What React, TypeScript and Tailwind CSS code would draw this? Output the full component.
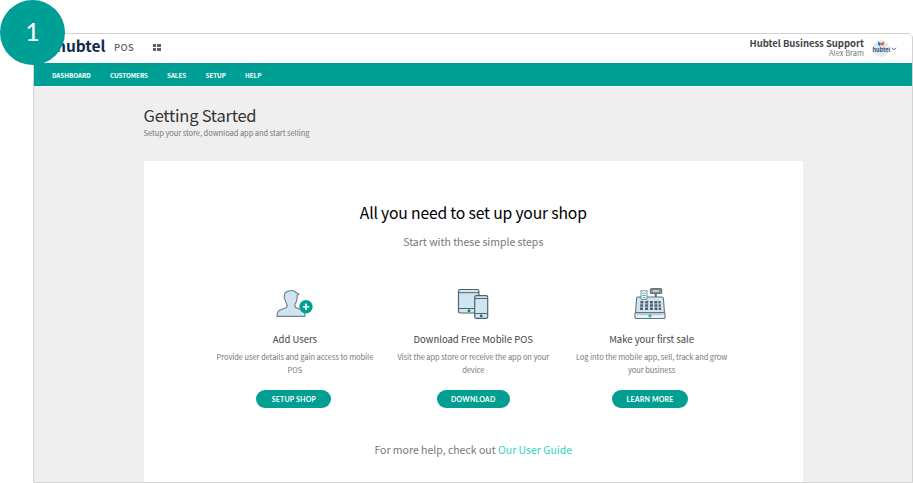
import React from "react";

const nav = [
  { label: "DASHBOARD", cls: "w-[58px]" },
  { label: "CUSTOMERS", cls: "w-[57px]" },
  { label: "SALES", cls: "w-[38.500px]" },
  { label: "SETUP", cls: "w-[39.500px]" },
  { label: "HELP", cls: "w-[30px]" },
];

function UserIcon() {
  return (
    <svg width="40" height="34" viewBox="0 0 40 34" className="-ml-[2px] block" fill="none">
      <path
        d="M3 30.4C3 25.5 4.500 24.300 8 23.300L12 21.700C13.200 21 13.300 19.500 12.800 18.200C11.600 16.700 11.200 15 11 13.200C9.900 12.600 10 10.700 10.700 10.200C9.900 7.300 11.500 5.900 14.500 5.200C17 3.900 20.500 4.500 21.700 6.300L25 8.200L23.200 9.300L23 12.900C22.800 15.400 22 17 21 18.200C20.600 19.700 20.700 20.900 22 21.600L26 23.200C29.900 24.300 31 25.700 31 30.400Z"
        fill="#cfe5f2" stroke="#75848c" strokeWidth="1.200" strokeLinejoin="round"
      />
      <circle cx="32" cy="20.800" r="6.700" fill="#009f92" />
      <path d="M28.800 20.800h6.400M32 17.600v6.400" stroke="#fff" strokeWidth="1.600" />
    </svg>
  );
}

function DevicesIcon() {
  return (
    <svg width="34" height="34" viewBox="0 0 34 34" className="block" fill="none" stroke="#53636d" strokeWidth="1.200">
      <rect x="2.500" y="3.500" width="20.400" height="23.500" rx="1.700" fill="#d0e5f2" />
      <path d="M3 6.700h20M3 22.500h20" strokeWidth="1" />
      <circle cx="13" cy="24.800" r="1.400" fill="#00796e" stroke="none" />
      <rect x="18.700" y="9.600" width="13" height="22.800" rx="1.700" fill="#d0e5f2" />
      <path d="M19 12.500h12.500M19 27.500h12.500" strokeWidth="1" />
      <circle cx="25.200" cy="29.900" r="1.400" fill="#00796e" stroke="none" />
    </svg>
  );
}

function RegisterIcon() {
  return (
    <svg width="34" height="34" viewBox="0 0 34 34" className="-ml-[3px] block" fill="none" stroke="#65747c" strokeWidth="1.100">
      <path d="M22.700 7v5" strokeWidth="2.200" />
      <rect x="17.500" y="2.700" width="11" height="4.700" rx="1" fill="#8c979d" strokeWidth="1.400" />
      <path d="M20 5h6" stroke="#e3edf3" strokeWidth="1.200" />
      <path d="M3.600 12.200Q3.700 11 5 11h24Q30.300 11 30.400 12.200L31.500 27h-29Z" fill="#d0e4f1" />
      <path d="M8 13.500V4.300l1.500.9 1.500-.9 1.500.9 1.500-.9V13.500Z" fill="#f7fcff" strokeWidth=".8" />
      <path d="M9.600 7.300h3M9.600 9.500h3M9.600 11.700h3" stroke="#22b9a9" strokeWidth="1" />
      <g stroke="#50616b" strokeWidth="2.500">
        <path d="M7.400 16.200h3M12.200 16.200h3M16.900 16.200h3M21.300 16.200h3M25.400 16.200h2.200" />
        <path d="M7.200 19.500h3M12.100 19.500h3M16.900 19.500h3M21.400 19.500h3M25.600 19.500h2.200" />
        <path d="M7 22.800h3M12 22.800h3M16.900 22.800h3M21.500 22.800h3M25.800 22.800h2.300" />
      </g>
      <rect x="2" y="26.600" width="30" height="5.900" rx="1" fill="#e4f1f9" />
      <path d="M4 28.300h26" stroke="#8b9aa3" strokeWidth=".6" />
      <circle cx="17" cy="29.800" r="1.600" fill="#25bcae" stroke="none" />
    </svg>
  );
}

const steps = [
  { title: "Add Users", lines: ["Provide user details and gain access to mobile", "POS"], action: "SETUP SHOP", icon: <UserIcon />, btn: "w-[75px] mr-[2px]" },
  { title: "Download Free Mobile POS", lines: ["Visit the app store or receive the app on your", "device"], action: "DOWNLOAD", icon: <DevicesIcon />, btn: "w-[73px]" },
  { title: "Make your first sale", lines: ["Log into the mobile app, sell, track and grow", "your business"], action: "LEARN MORE", icon: <RegisterIcon />, btn: "w-[76px] mr-[3px]" },
];

export default function App() {
  return (
    <div className="relative h-[483px] w-[913px] overflow-hidden bg-white pl-[33px] pt-[33px] font-['Noto_Sans_CJK_SC',sans-serif]">
      <div className="flex h-[450px] w-[880px] flex-col overflow-hidden rounded-t-[5px] border border-[#d3d3d3] bg-[#efefef]">
        <header className="flex h-[29px] shrink-0 items-center bg-white">
          <span className="-mt-[7px] ml-[22px] w-[50px] whitespace-nowrap text-[15.500px] font-bold leading-[20px] text-[#11294b]">hubtel</span>
          <span className="-mt-[3px] ml-[8px] w-[39px] text-[9.500px] font-medium leading-[14px] tracking-[0.3px] text-[#666]">POS</span>
          <span className="-mt-[3px] grid grid-cols-[3px_4px] gap-px">
            <i className="h-[3px] bg-[#606060]" />
            <i className="h-[3px] bg-[#606060]" />
            <i className="h-[3px] bg-[#606060]" />
            <i className="h-[3px] bg-[#606060]" />
          </span>
          <div className="-mt-[3px] ml-auto text-right">
            <div className="text-[9.500px] font-bold leading-[11px] tracking-[-0.03px] text-[#444]">Hubtel Business Support</div>
            <div className="text-[7.500px] leading-[8px] text-[#777]">Alex Bram</div>
          </div>
          <svg className="ml-[7px] mr-[15px]" width="26" height="20" viewBox="0 0 26 20">
            <circle cx="10" cy="9.500" r="8.500" fill="#e9e9e9" />
            <path d="M7 2.500l3 2-1 2.500-2-1z" fill="#0784c9" />
            <path d="M10 4l3-1.500-.5 4.500-2.500-1z" fill="#f05b27" />
            <text x="1.600" y="12.500" fontFamily="Noto Sans CJK SC" fontWeight="700" fontSize="5.500" fill="#244f7a">hubtel</text>
            <path d="M21 8.800l2 2 2-2" fill="none" stroke="#555" strokeWidth="1" />
          </svg>
        </header>
        <nav className="flex h-[24px] shrink-0 items-center border-b border-[#fafafa] bg-[#009f96] pl-[18px] pt-[2px] text-[6.300px] font-bold leading-[10px] tracking-[-0.05px] text-white">
          {nav.map((n) => (
            <span key={n.label} className={`${n.cls} shrink-0 whitespace-nowrap`}>{n.label}</span>
          ))}
        </nav>
        <main className="flex flex-1 flex-col items-start pl-[109.500px] pt-[17px]">
          <h1 className="text-[16.500px] leading-[22px] tracking-[-0.23px] text-[#333]">Getting Started</h1>
          <p className="mt-px text-[7.500px] leading-[12px] tracking-[-0.06px] text-[#777]">Setup your store, download app and start selling</p>
          <section className="mt-[21.500px] flex w-[659.500px] flex-1 flex-col items-center bg-white pt-[39px]">
            <h2 className="text-[15.700px] leading-[26px] tracking-[-0.17px] text-black">All you need to set up your shop</h2>
            <p className="mt-[7px] text-[10.500px] leading-[18px] text-[#777]">Start with these simple steps</p>
            <div className="mt-[35px] flex w-[535px]">
              {steps.map((s) => (
                <div key={s.title} className="flex flex-1 flex-col items-center">
                  {s.icon}
                  <h3 className="mt-[11px] whitespace-nowrap text-[9.500px] leading-[16px] text-[#444]">{s.title}</h3>
                  <div className="mt-[3px] text-center text-[7.500px] leading-[13px] tracking-[-0.07px] text-[#777]">
                    {s.lines.map((l) => (
                      <div key={l} className="whitespace-nowrap">{l}</div>
                    ))}
                  </div>
                  <button className={`mt-[14.500px] h-[18px] rounded-full bg-[#009f92] font-['Lato',sans-serif] text-[7px] font-bold leading-[17px] tracking-[0.2px] text-white ${s.btn}`}>{s.action}</button>
                </div>
              ))}
            </div>
            <p className="mt-[32.500px] text-[10.500px] leading-[18px] text-[#777]">
              For more help, check out <span className="text-[#2ed5c2]">Our User Guide</span>
            </p>
          </section>
        </main>
      </div>
      <div className="absolute left-0 top-0 flex h-[65px] w-[65px] items-center justify-center rounded-full bg-[#009f96] pb-[2px] font-['Lato',sans-serif] text-[25px] leading-none text-white">1</div>
    </div>
  );
}
